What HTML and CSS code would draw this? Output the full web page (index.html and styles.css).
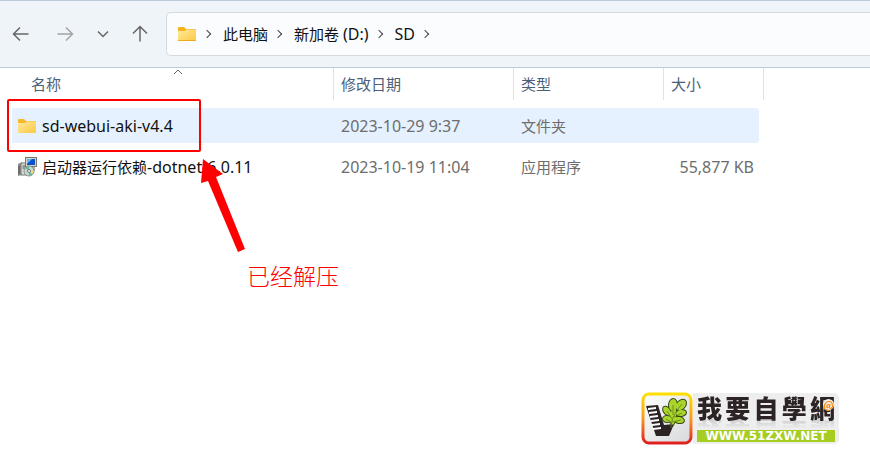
FILE: index.html
```html
<!DOCTYPE html>
<html lang="zh-CN">
<head>
  <meta charset="UTF-8" />
  <meta name="viewport" content="width=device-width, initial-scale=1" />
  <title>SD</title>
  <link rel="stylesheet" href="styles.css">
</head>
<body>

  <header class="toolbar">
    <div class="nav-buttons">
      <button type="button" class="nav-btn" aria-label="后退">
        <svg width="18" height="18" viewBox="0 0 18 18"><path d="M16.500 9H1.500M8 2.500L1.500 9L8 15.500" /></svg>
      </button>
      <button type="button" class="nav-btn muted" aria-label="前进">
        <svg width="18" height="18" viewBox="0 0 18 18"><path d="M1.500 9H16.500M10 2.500L16.500 9L10 15.500" /></svg>
      </button>
      <button type="button" class="nav-btn small" aria-label="最近浏览的位置">
        <svg width="12" height="12" viewBox="0 0 12 12"><path d="M1 3.500L6 8.500L11 3.500" /></svg>
      </button>
      <button type="button" class="nav-btn" aria-label="向上">
        <svg width="18" height="18" viewBox="0 0 18 18"><path d="M9 16.500V1.500M2 8.500L9 1.500L16 8.500" /></svg>
      </button>
    </div>

    <nav class="address-bar" aria-label="地址">
      <svg class="folder" width="20" height="16" viewBox="0 0 20 16">
        <defs>
          <linearGradient id="folder-fill" x1="0" y1="0" x2="1" y2="1">
            <stop offset="0" stop-color="#ffe9a0" />
            <stop offset="1" stop-color="#fdc93f" />
          </linearGradient>
        </defs>
        <path d="M1 2Q1 1 2 1H7L9 3H18Q19 3 19 4V8H1Z" fill="#f5b31c" />
        <path d="M1 5H8L9.500 3.500H18Q19 3.500 19 4.500V14Q19 15 18 15H2Q1 15 1 14Z" fill="url(#folder-fill)" />
        <path d="M1 14H19Q19 15 18 15H2Q1 15 1 14Z" fill="#efa91b" />
      </svg>
      <ol class="crumbs">
        <li><a href="#">此电脑</a></li>
        <li><a href="#">新加卷 <span class="latin">(D:)</span></a></li>
        <li><a href="#" class="latin">SD</a></li>
        <li></li>
      </ol>
    </nav>
  </header>

  <main class="files">
    <table class="file-table">
      <colgroup>
        <col class="col-name"><col class="col-date"><col class="col-type"><col class="col-size"><col class="col-end">
      </colgroup>
      <thead>
        <tr>
          <th>
            <button type="button" class="sort-btn sorted">名称
              <svg class="sort-mark" width="10" height="6" viewBox="0 0 10 6"><path d="M1 5L5 1L9 5" /></svg>
            </button>
          </th>
          <th><button type="button" class="sort-btn">修改日期</button></th>
          <th><button type="button" class="sort-btn">类型</button></th>
          <th colspan="2"><button type="button" class="sort-btn">大小</button></th>
        </tr>
      </thead>
      <tbody>
        <tr class="selected">
          <td>
            <a class="file" href="#">
              <svg class="folder" width="20" height="16" viewBox="0 0 20 16">
                <path d="M1 2Q1 1 2 1H7L9 3H18Q19 3 19 4V8H1Z" fill="#f5b92e" />
                <path d="M1 5H8L9.500 3.500H18Q19 3.500 19 4.500V14Q19 15 18 15H2Q1 15 1 14Z" fill="url(#folder-fill)" />
              </svg>
              <span class="latin">sd-webui-aki-v4.4</span>
            </a>
          </td>
          <td class="latin">2023-10-29 9:37</td>
          <td>文件夹</td>
          <td></td>
          <td></td>
        </tr>
        <tr>
          <td>
            <a class="file" href="#">
              <svg width="20" height="20" viewBox="0 0 20 20">
                <path d="M1 7L5 5V18L1 19Z" fill="#8d8d8d" />
                <path d="M4 6H10V18H4Z" fill="#dcdcd6" stroke="#77776f" />
                <path d="M2 9V17M5.500 9H9M5.500 11H8" stroke="#4f4f4b" />
                <path d="M14 10H18V14L14 16Z" fill="#b0aea4" />
                <rect x="8.500" y="0.500" width="11" height="9" fill="#d5d5cc" stroke="#77776f" />
                <rect x="10" y="2" width="8" height="6" fill="#0a50c8" />
                <path d="M10 2H15L10 7Z" fill="#61b9f5" />
                <circle cx="12" cy="14" r="5" fill="#c6d8d3" stroke="#84928d" />
                <path d="M12 14L8 11Q10 9 12 9ZM12 14L16 17Q14 19 12 19Z" fill="#67b899" />
                <path d="M12 14L17 14L15 17Z" fill="#eee56d" />
                <circle cx="12" cy="14" r="1.500" fill="#fff" stroke="#6c7975" />
              </svg>
              <span>启动器运行依赖<span class="latin">-dotnet-6.0.11</span></span>
            </a>
          </td>
          <td class="latin">2023-10-19 11:04</td>
          <td>应用程序</td>
          <td class="size latin">55,877 KB</td>
          <td></td>
        </tr>
      </tbody>
    </table>

    <!-- callout drawn over the list -->
    <div class="mark-box"></div>
    <svg class="mark-arrow" width="46" height="96" viewBox="0 0 46 96">
      <path d="M4 1L24 16L17 19L46 91L39 94L9 23L2 25Z" fill="#fe0000" />
    </svg>
    <p class="mark-text">已经解压</p>
  </main>

  <footer class="brand">
    <svg class="brand-icon" width="53" height="53" viewBox="0 0 53 53">
      <defs>
        <linearGradient id="brand-frame" x1="0" y1="0" x2="0" y2="1">
          <stop offset="0" stop-color="#ffdf00" />
          <stop offset="0.500" stop-color="#f89a20" />
          <stop offset="1" stop-color="#df2020" />
        </linearGradient>
        <linearGradient id="brand-bg" x1="0" y1="0" x2="1" y2="1">
          <stop offset="0" stop-color="#fff" />
          <stop offset="1" stop-color="#d7d8da" />
        </linearGradient>
        <g id="leaf">
          <ellipse cx="33" cy="13" rx="4" ry="6" transform="rotate(4 33 13)" />
          <ellipse cx="41" cy="13" rx="4" ry="6" transform="rotate(42 41 13)" />
          <ellipse cx="27" cy="19" rx="3" ry="5" transform="rotate(-38 27 19)" />
          <ellipse cx="41" cy="21" rx="5" ry="3" transform="rotate(-8 41 21)" />
          <ellipse cx="27" cy="27" rx="4" ry="3" transform="rotate(8 27 27)" />
          <ellipse cx="39" cy="28" rx="5" ry="3" transform="rotate(12 39 28)" />
          <path d="M30 20L36 17L36 28L33 33L29 29Z" />
        </g>
      </defs>
      <rect x="3" y="2" width="48" height="49" rx="6" fill="url(#brand-bg)" stroke="url(#brand-frame)" stroke-width="3" />
      <path d="M6 14L18 13L24 33L34 32L29 44H16Z" fill="#2c2424" />
      <path d="M8 16L16 15V17L8 18ZM9 20L17 19V21L9 22ZM10 24L18 23V25L10 26ZM11 28L19 27V29L11 30ZM12 32L20 31V33L12 34ZM13 36L21 35V37L13 38Z" fill="#fff" />
      <use href="#leaf" fill="#36451b" stroke="#36451b" stroke-width="2" />
      <use href="#leaf" fill="#a9d629" />
      <path d="M31 36C31 28 35 20 42 12M33 23L33 13M32 27L27 19M31 30L26 27M34 25L42 21M32 30L41 28" fill="none" stroke="#5d7f20" stroke-width="0.800" />
    </svg>
    <div class="brand-body">
      <div class="brand-name">
        <span>我</span><span>要</span><span>自</span><span>學</span><span class="net">網</span>
      </div>
      <a class="brand-url" href="#">WWW.51ZXW.NET</a>
    </div>
  </footer>

</body>
</html>
```
FILE: styles.css
```css
* {
  box-sizing: border-box;
}

body {
  margin: 0;
  min-height: 100vh;
  display: flex;
  flex-direction: column;
  background: #fff;
  color: #111;
  font-family: "Noto Sans", "Noto Sans CJK SC", sans-serif;
  font-size: 15px;
  line-height: 20px;
}

a {
  color: inherit;
  text-decoration: none;
}

button {
  padding: 0;
  border: none;
  background: none;
  color: inherit;
  font: inherit;
}

svg {
  display: block;
  flex-shrink: 0;
}

.latin {
  font-size: 16px;
}

/* Toolbar */
.toolbar {
  display: flex;
  align-items: center;
  height: 68px;
  padding-bottom: 1px;
  border-top: 1px solid #b9cadb;
  border-bottom: 1px solid #b9cadb;
  background: #eff4f9;
}

.nav-buttons {
  display: flex;
  flex-shrink: 0;
  gap: 26px;
  width: 166px;
  padding-left: 12px;
}

.nav-btn {
  display: flex;
  width: 18px;
  height: 32px;
  align-items: center;
  justify-content: center;
}

.nav-btn.small {
  width: 12px;
  margin: 0 -4px 0 -3px;
}

.nav-btn svg,
.sort-mark {
  fill: none;
  stroke: #666;
  stroke-width: 1.5;
}

.nav-btn.muted svg {
  stroke: #a2a4a6;
}

.address-bar {
  display: flex;
  flex: 1;
  align-items: center;
  height: 44px;
  padding-left: 10px;
  border: 1px solid #d5d9dd;
  border-right: none;
  border-radius: 5px 0 0 5px;
  background: #fbfcfe;
}

.crumbs {
  display: flex;
  margin: 0;
  padding: 0;
  list-style: none;
}

.crumbs li {
  display: flex;
  align-items: center;
}

.crumbs li::before {
  content: "";
  width: 5px;
  height: 5px;
  margin: 0 13px 0 7px;
  border-top: 1px solid #444;
  border-right: 1px solid #444;
  transform: rotate(45deg);
}

/* File list */
.files {
  position: relative;
  flex: 1;
}

.file-table {
  width: 752px;
  max-width: 100%;
  margin-left: 12px;
  border-collapse: separate;
  border-spacing: 0;
  table-layout: fixed;
}

.col-name { width: 322px; }
.col-date { width: 180px; }
.col-type { width: 150px; }
.col-size { width: 95px; }
.col-end { width: 5px; }

th {
  padding: 0 0 5px;
  font-weight: normal;
}

.sort-btn {
  display: block;
  position: relative;
  width: 100%;
  height: 32px;
  padding-left: 7px;
  border-right: 1px solid #e2e2e2;
  color: #4c607a;
  text-align: left;
}

.sort-btn.sorted {
  padding-left: 19px;
}

.sort-mark {
  position: absolute;
  top: 1px;
  left: 50%;
  stroke-width: 1;
}

td {
  height: 41px;
  padding: 0 0 0 7px;
  border: solid transparent;
  border-width: 3px 0;
  background-clip: padding-box;
  color: #6d6d6d;
}

td:first-child {
  padding-left: 5px;
}

.size {
  padding: 0 5px 0 0;
  text-align: right;
}

.selected td:not(:last-child) {
  background-color: #e5f1fe;
}

.selected td:nth-child(4) {
  border-radius: 0 5px 5px 0;
}

.file {
  display: flex;
  align-items: center;
  gap: 5px;
  color: #111;
}

/* Callout */
.mark-box {
  position: absolute;
  top: 31px;
  left: 7px;
  width: 194px;
  height: 53px;
  border: 2px solid #fe0000;
  border-radius: 2px;
}

.mark-arrow {
  position: absolute;
  top: 90px;
  left: 199px;
}

.mark-text {
  position: absolute;
  top: 191px;
  left: 247px;
  margin: 0;
  color: #fe0000;
  font-family: "Noto Sans CJK SC", sans-serif;
  font-size: 23px;
  font-weight: 300;
  line-height: 32px;
}

/* Brand */
.brand {
  display: flex;
  align-self: flex-end;
  align-items: center;
  margin: 0 31px 21px 0;
}

.brand-body {
  width: 146px;
  height: 51px;
  padding: 1px 4px 0;
  border-radius: 0 5px 5px 0;
  background: #eeeeef;
}

.brand-name {
  display: flex;
  justify-content: space-between;
  height: 36px;
  color: #2c2424;
  font-family: "Noto Sans CJK TC", sans-serif;
  font-size: 25px;
  font-weight: 900;
  line-height: 26px;
}

.brand-name span {
  height: 26px;
  -webkit-box-reflect: below -3px linear-gradient(transparent 55%, rgb(0 0 0 / 0.2));
}

.net {
  position: relative;
}

.net::after {
  content: "@";
  position: absolute;
  right: 1px;
  top: 5px;
  width: 11px;
  border-radius: 50%;
  background: #f5eee5;
  color: #f58a12;
  font-size: 10px;
  line-height: 11px;
  text-align: center;
}

.brand-url {
  display: block;
  background: #a5cd22;
  color: #fff;
  font-family: "DejaVu Sans", sans-serif;
  font-size: 12px;
  font-weight: bold;
  line-height: 12px;
  text-align: center;
}
```
